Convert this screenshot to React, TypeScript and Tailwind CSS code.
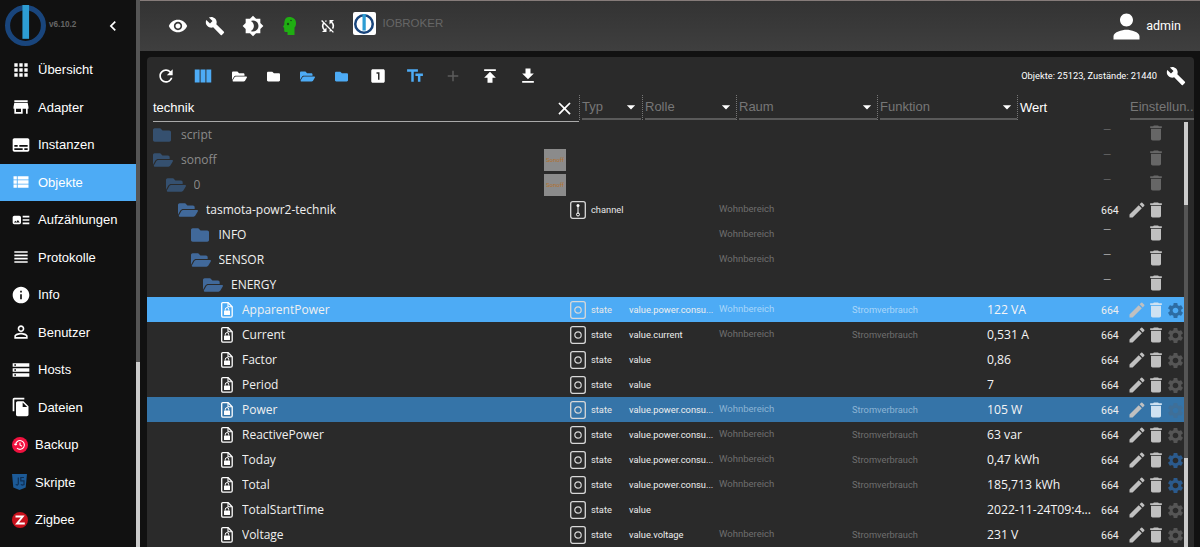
import type { ReactNode } from 'react'
import {
  MdApps, MdStore, MdSubtitles, MdViewList, MdArtTrack, MdViewHeadline, MdInfo, MdPermIdentity, MdStorage, MdFileCopy,
  MdVisibility, MdBuild, MdBrightness4, MdSyncDisabled, MdRefresh, MdViewColumn, MdLooksOne, MdAdd, MdPublish,
  MdFileDownload, MdEdit, MdDelete, MdSettings, MdPerson, MdClose, MdChevronLeft, MdArrowDropDown, MdTextFields,
} from 'react-icons/md'
import { FaFolder, FaFolderOpen } from 'react-icons/fa'

function Logo({ size }: { size: number }) {
  return (
    <svg width={size} height={size} viewBox="0 0 40 40">
      <circle cx="20" cy="20" r="17.500" fill="none" stroke="#19457c" strokeWidth="5" />
      <rect x="17" y="0" width="6.500" height="33" fill="#2d9dd3" />
    </svg>
  )
}

function BackupIcon() {
  return (
    <svg width="16" height="16" viewBox="0 0 16 16">
      <circle cx="8" cy="8" r="8" fill="#f0123f" />
      <path d="M3.600 8a4.400 4.400 0 1 1 1.400 3.200M3.600 8 2.400 6.800M3.600 8l1.300-1.200M8 5.400V8l2 1.200" fill="none" stroke="#fff" strokeWidth="1.100" />
    </svg>
  )
}

function JsIcon() {
  return (
    <svg width="15" height="16" viewBox="0 0 15 16">
      <path d="M0 0h15l-1.300 13.500L7.500 16l-6.200-2.500z" fill="#1c5a97" />
      <path d="M6.300 3.500v6.600l-1 1-1.600-.6M12 3.500H8.800v3.400H12v3.600l-1.600.6-1.600-.6" fill="none" stroke="#0f2f55" strokeWidth="1.200" />
    </svg>
  )
}

function ZigbeeIcon() {
  return (
    <svg width="16" height="16" viewBox="0 0 16 16">
      <circle cx="8" cy="8" r="8" fill="#c8111c" />
      <path d="M3.500 3.600h9.200L7 10.600h5.800v2H3l5.800-7H3.500z" fill="#fff" />
    </svg>
  )
}

function GreenHead() {
  return (
    <svg width="14" height="18" viewBox="0 0 14 18">
      <path d="M6 0c4.500 0 7 2.500 7 6 0 2-.5 3.500-1.500 4.500V18H4.500v-3H2.500c-1 0-1.300-.8-1.300-1.800V11L0 9.800 1.300 7.500C1.300 3 2.500 0 6 0z" fill="#1fae12" />
      <circle cx="5" cy="7" r="1.200" fill="#14500e" />
      <circle cx="8" cy="3.500" r=".8" fill="#14500e" />
    </svg>
  )
}

function FileLock({ color }: { color: string }) {
  return (
    <svg width="12" height="16" viewBox="0 0 12 16" fill="none">
      <path d="M1.700.7h5.500l4 4v9a1.500 1.500 0 0 1-1.500 1.500H1.700A1.200 1.200 0 0 1 .7 14V1.700a1 1 0 0 1 1-1z" stroke={color} strokeWidth="1.300" />
      <path d="M7 1v3.800h4" stroke={color} strokeWidth="1.100" />
      <rect x="3" y="8.500" width="6" height="4.500" rx=".6" fill={color} />
      <path d="M4.300 8.500V7.300a1.700 1.700 0 0 1 3.400 0v1.200" stroke={color} strokeWidth="1" />
    </svg>
  )
}

function TypeBox({ kind }: { kind: 'state' | 'channel' }) {
  return (
    <svg width="16" height="18" viewBox="0 0 16 18" fill="none">
      <rect x=".7" y=".7" width="14.600" height="16.600" rx="2" stroke="#d8d8d8" strokeWidth="1.300" />
      {kind === 'state' ? (
        <circle cx="8" cy="9" r="3.200" stroke="#d8d8d8" strokeWidth="1.200" />
      ) : (
        <>
          <path d="M8 4v9" stroke="#fff" strokeWidth="1" />
          <circle cx="8" cy="4.500" r="1.500" fill="#fff" />
          <circle cx="8" cy="13.500" r="1.500" stroke="#fff" strokeWidth="1" />
        </>
      )}
    </svg>
  )
}

const navItems: { label: string; icon: ReactNode; active?: boolean; custom?: boolean }[] = [
  { label: 'Übersicht', icon: <MdApps size={20} /> },
  { label: 'Adapter', icon: <MdStore size={20} /> },
  { label: 'Instanzen', icon: <MdSubtitles size={20} /> },
  { label: 'Objekte', icon: <MdViewList size={20} />, active: true },
  { label: 'Aufzählungen', icon: <MdArtTrack size={20} /> },
  { label: 'Protokolle', icon: <MdViewHeadline size={20} /> },
  { label: 'Info', icon: <MdInfo size={20} /> },
  { label: 'Benutzer', icon: <MdPermIdentity size={20} /> },
  { label: 'Hosts', icon: <MdStorage size={20} /> },
  { label: 'Dateien', icon: <MdFileCopy size={20} /> },
  { label: 'Backup', icon: <BackupIcon />, custom: true },
  { label: 'Skripte', icon: <JsIcon />, custom: true },
  { label: 'Zigbee', icon: <ZigbeeIcon />, custom: true },
]

function Sidebar() {
  return (
    <aside className="flex h-full w-[140px] shrink-0 bg-[#111111] font-['Liberation_Sans',sans-serif] text-white">
      <div className="w-[136px]">
        <div className="flex h-[51px] items-center pl-[5px]">
          <Logo size={41} />
          <span className="ml-[3px] text-[8.200px] font-bold text-[#666666]">v6.10.2</span>
          <MdChevronLeft size={20} className="ml-[27px]" />
        </div>
        <nav className="flex flex-col">
          {navItems.map((item) => (
            <div
              key={item.label}
              className={`flex h-[37.500px] items-center text-[13px] ${item.active ? 'bg-[#4dabf5]' : ''}`}
            >
              <span className={`flex ${item.custom ? 'w-[35px] justify-start pl-[12px]' : 'w-[38px] justify-center pl-[6px] pr-[2px]'}`}>
                {item.icon}
              </span>
              {item.label}
            </div>
          ))}
        </nav>
      </div>
      <div className="flex w-1 flex-col">
        <div className="h-[362px] bg-[#555555]" />
        <div className="flex-1 bg-[#cccccc]" />
      </div>
    </aside>
  )
}

function TopBar() {
  return (
    <header className="flex h-[51px] shrink-0 items-center border-t border-[#857b79] bg-gradient-to-b from-[#333333] to-[#3f3f3f] pl-[19px] pr-[19px] text-white">
      <span className="flex w-[37.500px] justify-center"><MdVisibility size={20} /></span>
      <span className="flex w-[37.500px] justify-center"><MdBuild size={20} /></span>
      <span className="flex w-[37.500px] justify-center"><MdBrightness4 size={22} /></span>
      <span className="flex w-[37.500px] justify-center"><GreenHead /></span>
      <span className="flex w-[37.500px] justify-center"><MdSyncDisabled size={18} /></span>
      <span className="ml-[6px] mb-[5px] flex h-[23px] w-[23px] items-center justify-center rounded-[2px] bg-white"><Logo size={20} /></span>
      <span className="ml-[7px] mb-[5px] font-['Liberation_Sans',sans-serif] text-[11.500px] text-[#666666]">IOBROKER</span>
      <span className="ml-auto flex items-center font-['Roboto',sans-serif] text-[12.500px]">
        <MdPerson size={39} />
        admin
      </span>
    </header>
  )
}

function ToolButton({ children }: { children: ReactNode }) {
  return <span className="flex w-[37.500px] justify-center">{children}</span>
}

function FolderButton({ children }: { children: ReactNode }) {
  return <span className="flex w-[34px] justify-center">{children}</span>
}

function Toolbar() {
  return (
    <div className="flex h-[38px] items-center pr-[8px] text-white">
      <ToolButton><MdRefresh size={20} /></ToolButton>
      <ToolButton><MdViewColumn size={22} className="text-[#4dabf5]" /></ToolButton>
      <FolderButton><FaFolderOpen size={15} /></FolderButton>
      <FolderButton><FaFolder size={13} /></FolderButton>
      <FolderButton><FaFolderOpen size={15} className="text-[#4dabf5]" /></FolderButton>
      <FolderButton><FaFolder size={13} className="text-[#4dabf5]" /></FolderButton>
      <span className="ml-[1px]"><ToolButton><MdLooksOne size={18} /></ToolButton></span>
      <ToolButton><MdTextFields size={20} className="text-[#4dabf5]" /></ToolButton>
      <ToolButton><MdAdd size={18} className="text-[#5c5c5c]" /></ToolButton>
      <ToolButton><MdPublish size={20} /></ToolButton>
      <ToolButton><MdFileDownload size={20} /></ToolButton>
      <span className="ml-auto font-['Roboto',sans-serif] text-[9.300px]">Objekte: 25123, Zustände: 21440</span>
      <MdBuild size={20} className="ml-[9px]" />
    </div>
  )
}

function ColumnFilter({ label, width }: { label: string; width: string }) {
  return (
    <div className={`mb-[2px] flex h-[25px] border-l border-dotted border-[#777777] pl-[2px] ${width}`}>
      <div className="flex flex-1 items-center justify-between border-b-2 border-[#5a5a5a] text-[13px] text-[#777777]">
        {label}
        <MdArrowDropDown size={20} className="text-white" />
      </div>
    </div>
  )
}

function FilterRow() {
  return (
    <div className="flex items-end pl-[6px] font-['Liberation_Sans',sans-serif]">
      <div className="flex h-[27px] w-[426px] items-center justify-between border-b border-[#aaaaaa] pr-[4px] text-[13px] text-white">
        technik
        <MdClose size={21} />
      </div>
      <ColumnFilter label="Typ" width="w-[63px] pr-[1px]" />
      <ColumnFilter label="Rolle" width="w-[94px]" />
      <ColumnFilter label="Raum" width="w-[141px]" />
      <ColumnFilter label="Funktion" width="w-[140px]" />
      <div className="mb-[2px] flex h-[25px] w-[113px] items-center border-l border-dotted border-[#777777] pl-[2px] text-[13px] text-white">Wert</div>
      <div className="mb-[2px] flex h-[25px] flex-1 items-center border-b-2 border-[#5a5a5a] text-[13px] text-[#777777]">Einstellun..</div>
    </div>
  )
}

type RowData = {
  name: string
  level: number
  kind: 'open' | 'closed' | 'file'
  dim?: boolean
  thumb?: boolean
  type?: 'state' | 'channel'
  role?: string
  room?: string
  func?: string
  value?: string
  acl?: string
  gearBlue?: boolean
  bg?: string
  subtle?: string
  gear?: string
}

const power = 'value.power.consu...'
const room = 'Wohnbereich'
const func = 'Stromverbrauch'

const rows: RowData[] = [
  { name: 'script', level: 0, kind: 'closed', dim: true },
  { name: 'sonoff', level: 0, kind: 'open', dim: true, thumb: true },
  { name: '0', level: 1, kind: 'open', dim: true, thumb: true },
  { name: 'tasmota-powr2-technik', level: 2, kind: 'open', type: 'channel', room, acl: '664' },
  { name: 'INFO', level: 3, kind: 'closed', room },
  { name: 'SENSOR', level: 3, kind: 'open', room },
  { name: 'ENERGY', level: 4, kind: 'open' },
  { name: 'ApparentPower', level: 5, kind: 'file', type: 'state', role: power, room, func, value: '122 VA', acl: '664', bg: 'bg-[#4dabf5]', subtle: 'text-[#a9d6f9]', gear: 'text-[#2d6ca3]' },
  { name: 'Current', level: 5, kind: 'file', type: 'state', role: 'value.current', room, func, value: '0,531 A', acl: '664' },
  { name: 'Factor', level: 5, kind: 'file', type: 'state', role: 'value', value: '0,86', acl: '664' },
  { name: 'Period', level: 5, kind: 'file', type: 'state', role: 'value', value: '7', acl: '664' },
  { name: 'Power', level: 5, kind: 'file', type: 'state', role: power, room, func, value: '105 W', acl: '664', bg: 'bg-[#3574a8]', subtle: 'text-[#8db4d4]', gear: 'text-[#3f6f98]' },
  { name: 'ReactivePower', level: 5, kind: 'file', type: 'state', role: power, room, func, value: '63 var', acl: '664' },
  { name: 'Today', level: 5, kind: 'file', type: 'state', role: power, room, func, value: '0,47 kWh', acl: '664', gearBlue: true },
  { name: 'Total', level: 5, kind: 'file', type: 'state', role: power, room, func, value: '185,713 kWh', acl: '664', gearBlue: true },
  { name: 'TotalStartTime', level: 5, kind: 'file', type: 'state', role: 'value', value: '2022-11-24T09:4...', acl: '664' },
  { name: 'Voltage', level: 5, kind: 'file', type: 'state', role: 'value.voltage', room, func, value: '231 V', acl: '664' },
]

const indent = ['pl-[6px]', 'pl-[18.500px]', 'pl-[31px]', 'pl-[43.500px]', 'pl-[56px]', 'pl-[74px]']

function TreeRow({ row }: { row: RowData }) {
  const folderColor = row.dim ? 'text-[#35506f]' : 'text-[#41699a]'
  const subtle = row.subtle ?? 'text-[#6f6f6f]'
  const text = row.dim ? 'text-[#8a8a8a]' : 'text-[#f0f0f0]'
  const gear = row.gear ?? (row.gearBlue ? 'text-[#2b5a8c]' : 'text-[#555555]')
  return (
    <div className={`grid h-[25px] grid-cols-[423px_59px_90px_133px_135px_114px_1fr] grid-rows-[25px] items-center font-['Roboto',sans-serif] ${row.bg ?? ''}`}>
      <div className={`flex h-[25px] items-center ${indent[row.level]}`}>
        {row.kind === 'file' ? (
          <span className="flex w-[21px]"><FileLock color="#ffffff" /></span>
        ) : (
          <span className="flex w-[28px]">
            {row.kind === 'open' ? <FaFolderOpen size={20} className={folderColor} /> : <FaFolder size={18} className={folderColor} />}
          </span>
        )}
        <span className={`flex-1 truncate font-['Open_Sans',sans-serif] text-[12px] ${row.kind === 'file' ? 'mt-[1px]' : ''} ${text}`}>{row.name}</span>
        {row.thumb && (
          <span className="mr-[4px] flex h-[22px] w-[22px] items-center justify-center overflow-hidden bg-[#8b8b8b] text-[6px] text-[#b5702a]">Sonoff</span>
        )}
      </div>
      <div className="flex items-center gap-[5px] text-[9.300px] text-[#e8e8e8]">
        {row.type && <TypeBox kind={row.type} />}
        {row.type}
      </div>
      <div className="text-[9.300px] text-[#eeeeee]">{row.role}</div>
      <div className={`text-[9.500px] ${subtle}`}>{row.room}</div>
      <div className={`text-[9.300px] ${subtle}`}>{row.func}</div>
      <div className="mt-[1px] truncate font-['Open_Sans',sans-serif] text-[12.200px] text-[#f5f5f5]">{row.value}</div>
      <div className={`flex items-center ${row.acl ? 'mt-[1px]' : ''}`}>
        <span className={`w-[27px] text-[10.500px] ${row.acl ? 'mt-[2px] text-[#eeeeee]' : row.dim ? 'translate-y-[-5px] pl-[2px] text-[#666666]' : 'translate-y-[-5px] pl-[2px] text-[#aaaaaa]'}`}>
          {row.acl ?? '—'}
        </span>
        <span className="flex w-[18px] justify-center">
          {row.acl && <MdEdit size={20} className="shrink-0 text-[#c0c0c0]" />}
        </span>
        <MdDelete size={20} className={`${row.acl ? '' : 'translate-y-[-2px]'} ${row.dim ? 'text-[#666666]' : row.bg ? 'text-[#cfe2f2]' : 'text-[#c0c0c0]'}`} />
        {row.type === 'state' && <MdSettings size={19} className={gear} />}
      </div>
    </div>
  )
}

export default function App() {
  return (
    <div className="flex h-[547px] w-[1200px] overflow-hidden bg-[#111111]">
      <Sidebar />
      <main className="flex min-w-0 flex-1 flex-col">
        <TopBar />
        <section className="ml-[7px] mr-[6px] mt-[6px] flex-1 overflow-hidden rounded-t-[4px] bg-[#2a2a2a]">
          <Toolbar />
          <FilterRow />
          <div className="flex">
            <div className="w-[1037px] shrink-0">
              {rows.map((row) => (
                <TreeRow key={row.name} row={row} />
              ))}
            </div>
            <div className="flex h-[425px] w-1 flex-col">
              <div className="h-[83px] bg-[#cccccc]" />
              <div className="h-[253px] bg-[#555555]" />
              <div className="flex-1 bg-[#cccccc]" />
            </div>
          </div>
        </section>
      </main>
    </div>
  )
}
